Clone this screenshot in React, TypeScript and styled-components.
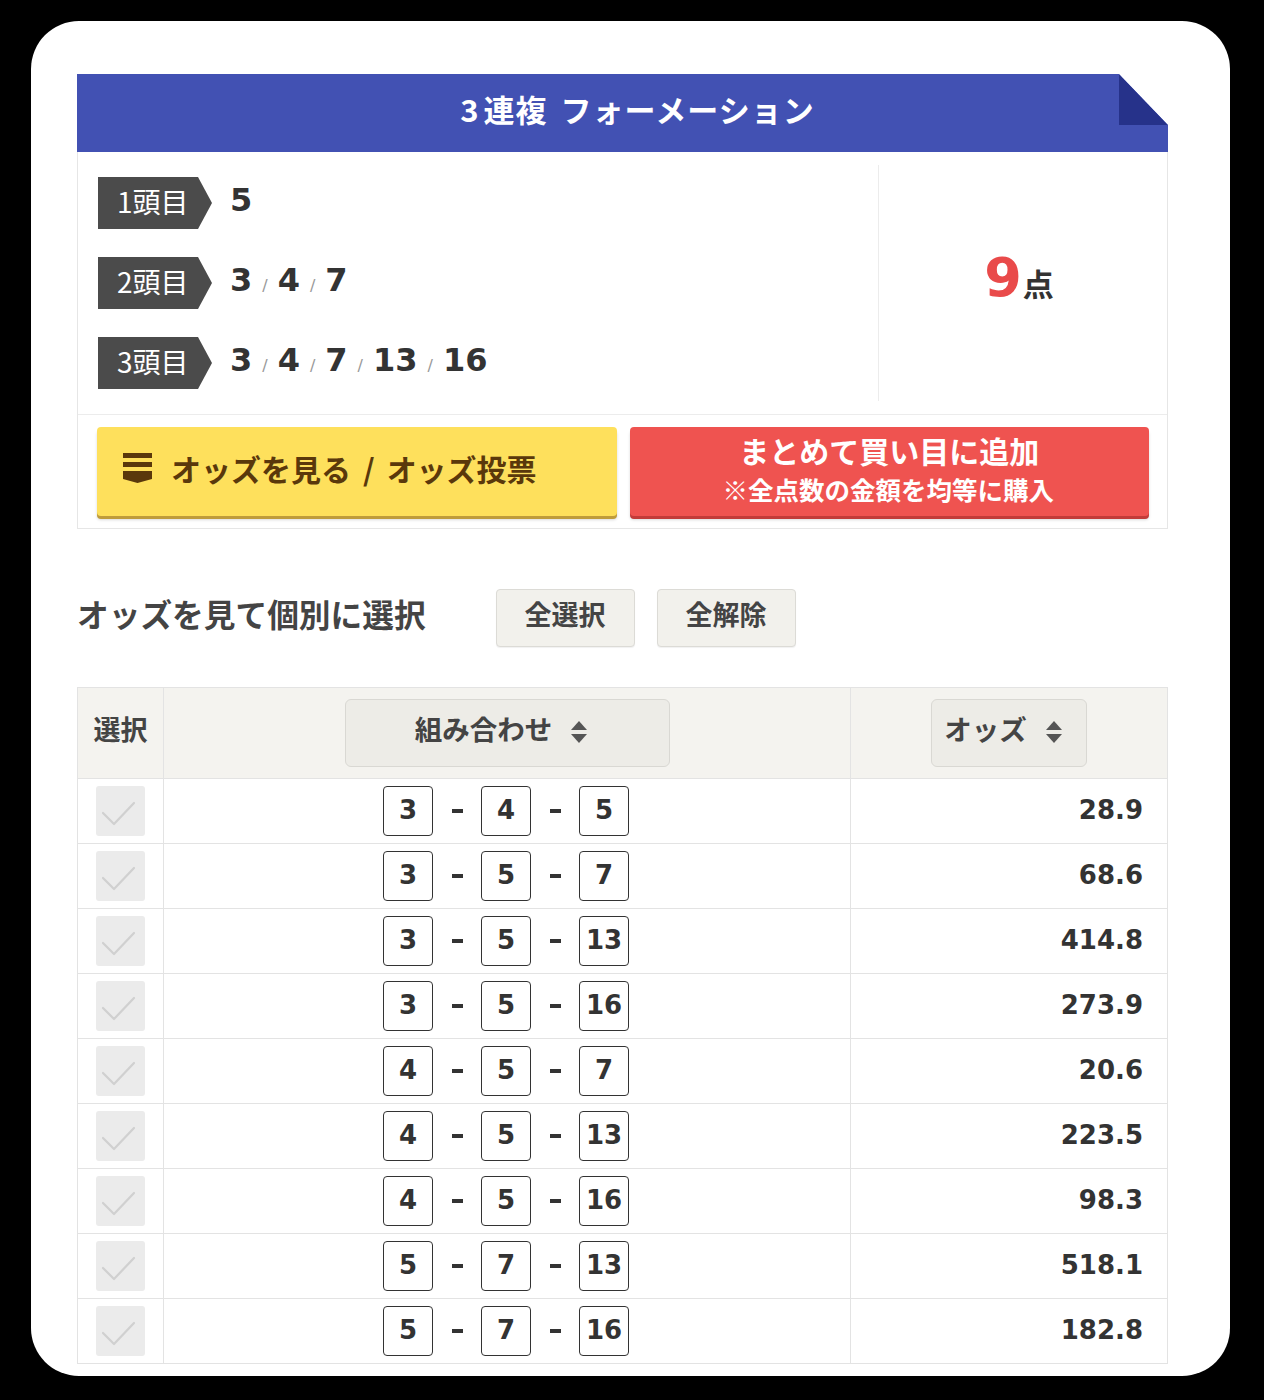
import React from "react";
import styled, { createGlobalStyle } from "styled-components";

const Global = createGlobalStyle`
  html, body { margin: 0; padding: 0; background: #000; }
  body { font-family: "Noto Sans CJK JP", "Noto Sans", sans-serif; color: #333; }
  * { box-sizing: border-box; }
`;

const JP = `"Noto Sans CJK JP", "Noto Sans", sans-serif`;
const NUM = `"DejaVu Sans", "Noto Sans CJK JP", sans-serif`;

const Page = styled.div`
  padding: 21px 34px 24px 31px;
`;

const Card = styled.div`
  width: 1199px;
  background: #fff;
  border-radius: 48px;
  padding: 53px 62px 12px 46px;
`;

const Header = styled.div`
  position: relative;
  height: 78px;
  display: flex;
  align-items: center;
  justify-content: center;
  padding-bottom: 9px;
  padding-left: 30px;
  color: #fff;
  font-family: ${JP};
  font-weight: 700;
  font-size: 31px;
  letter-spacing: 1px;
  background: #4251b3;
  clip-path: polygon(0 0, 1042px 0, 100% 51px, 100% 100%, 0 100%);
  &::after {
    content: "";
    position: absolute;
    left: 1042px;
    top: 0;
    width: 49px;
    height: 51px;
    background: #26328a;
    clip-path: polygon(0 0, 0 100%, 100% 100%);
  }
`;

const HeaderNum = styled.span`
  margin-right: 4px;
`;

const HeaderGap = styled.span`
  display: inline-block;
  width: 13px;
`;

const InfoBox = styled.div`
  border: 1px solid #e6e6e6;
  border-top: none;
`;

const InfoTop = styled.div`
  display: flex;
  border-bottom: 1px solid #ececec;
`;

const Legs = styled.div`
  width: 800px;
  padding: 25px 20px 25px 20px;
  display: flex;
  flex-direction: column;
  gap: 28px;
`;

const LegRow = styled.div`
  display: flex;
  align-items: center;
  height: 52px;
`;

const LegLabel = styled.div`
  width: 114px;
  height: 52px;
  background: #4b4b4b;
  color: #fff;
  font-family: ${JP};
  font-weight: 400;
  font-size: 28px;
  display: flex;
  align-items: center;
  padding-left: 19px;
  padding-bottom: 5px;
  clip-path: polygon(0 0, calc(100% - 14px) 0, 100% 50%, calc(100% - 14px) 100%, 0 100%);
`;

const LegValues = styled.div`
  margin-left: 18px;
  font-family: ${NUM};
  font-weight: 700;
  font-size: 32px;
  color: #333;
  display: flex;
  align-items: baseline;
  margin-top: -6px;
`;

const Sep = styled.span`
  font-family: ${NUM};
  font-weight: 400;
  font-size: 16px;
  color: #999;
  margin: 0 10px;
`;

const Total = styled.div`
  flex: 1;
  margin: 13px 0;
  border-left: 1px solid #ececec;
  display: flex;
  align-items: center;
  justify-content: center;
  padding-right: 8px;
  padding-bottom: 10px;
`;

const TotalNum = styled.span`
  font-family: ${NUM};
  font-weight: 700;
  font-size: 54px;
  color: #e94a4a;
  line-height: 1;
`;

const TotalUnit = styled.span`
  font-family: ${JP};
  font-weight: 700;
  font-size: 31px;
  color: #333;
  margin-left: 1px;
`;

const TotalWrap = styled.div`
  display: flex;
  align-items: baseline;
`;

const Actions = styled.div`
  display: flex;
  gap: 13px;
  padding: 12px 18px 9px 19px;
`;

const ActionButton = styled.button<{ $variant: "yellow" | "red" }>`
  flex: 1;
  height: 89px;
  margin-bottom: 3px;
  border: none;
  border-radius: 4px;
  cursor: pointer;
  font-family: ${JP};
  font-weight: 700;
  display: flex;
  background: ${(p) => (p.$variant === "yellow" ? "#fee05c" : "#ef5350")};
  color: ${(p) => (p.$variant === "yellow" ? "#5a380b" : "#fff")};
  box-shadow: ${(p) =>
    p.$variant === "yellow"
      ? "0 3px 0 #bf9c3b, 0 4px 3px rgba(0,0,0,0.15)"
      : "0 3px 0 #c23b39, 0 4px 3px rgba(0,0,0,0.15)"};
  padding: 0;
`;

const YellowInner = styled.div`
  display: flex;
  align-items: center;
  gap: 19px;
  padding-left: 26px;
  padding-bottom: 8px;
  font-size: 30px;
  width: 100%;
  height: 100%;
`;

const Slash = styled.span`
  margin: 0 12px;
`;

const RedInner = styled.div`
  display: flex;
  flex-direction: column;
  align-items: center;
  justify-content: center;
  width: 100%;
  height: 100%;
  padding-bottom: 2px;
`;

const RedMain = styled.div`
  font-size: 30px;
  line-height: 36px;
`;

const RedSub = styled.div`
  font-size: 25.5px;
  line-height: 42px;
  margin-right: 2px;
`;

const SelectBar = styled.div`
  display: flex;
  align-items: center;
  margin-top: 60px;
`;

const SelectTitle = styled.h2`
  margin: 0 70px 0 0;
  font-family: ${JP};
  font-weight: 700;
  font-size: 31.7px;
  line-height: 40px;
  color: #444;
  padding-bottom: 10px;
`;

const SmallButton = styled.button`
  width: 139px;
  height: 58px;
  margin-right: 22px;
  background: #f2f1ec;
  border: 1px solid #dcdbd6;
  border-radius: 4px;
  font-family: ${JP};
  font-weight: 700;
  font-size: 27px;
  color: #444;
  padding: 0 0 9px 0;
  box-shadow: 0 1px 1px rgba(0, 0, 0, 0.06);
`;

const Table = styled.table`
  margin-top: 40px;
  width: 100%;
  border-collapse: collapse;
  table-layout: fixed;
  border: 1px solid #e3e3e3;
`;

const HeadCell = styled.th<{ $w?: number }>`
  ${(p) => (p.$w ? `width: ${p.$w}px;` : "")}
  height: 91px;
  background: #f4f3ef;
  border: 1px solid #e3e3e3;
  font-family: ${JP};
  font-weight: 700;
  font-size: 27px;
  color: #444;
  padding: 0 0 10px 0;
  text-align: center;
`;

const SortButton = styled.button<{ $w: number }>`
  width: ${(p) => p.$w}px;
  height: 68px;
  margin-top: 9px;
  background: #edece7;
  border: 1px solid #d9d8d3;
  border-radius: 6px;
  font-family: ${JP};
  font-weight: 700;
  font-size: 27.5px;
  color: #444;
  display: inline-flex;
  align-items: center;
  justify-content: center;
  gap: 18px;
  padding: 0 11px 10px 0;
  vertical-align: middle;
  svg {
    margin-top: 8px;
  }
`;

const Row = styled.tr``;

const Cell = styled.td<{ $align?: string }>`
  height: 65px;
  border: 1px solid #e3e3e3;
  padding: 0;
  text-align: ${(p) => p.$align || "center"};
  vertical-align: middle;
`;

const OddsCell = styled(Cell)`
  font-family: ${NUM};
  font-weight: 700;
  font-size: 26px;
  color: #333;
  padding-right: 24px;
  padding-bottom: 3px;
  text-align: right;
`;

const CheckBox = styled.div`
  width: 49px;
  height: 50px;
  margin: 0 auto;
  background: #ebebeb;
  border-radius: 3px;
  display: flex;
  align-items: center;
  justify-content: center;
`;

const Combo = styled.div`
  display: inline-flex;
  align-items: center;
  margin-right: 2px;
`;

const NumBox = styled.span`
  width: 50px;
  height: 50px;
  border: 1.5px solid #333;
  border-radius: 4px;
  display: inline-flex;
  align-items: center;
  justify-content: center;
  padding-bottom: 3px;
  font-family: ${NUM};
  font-weight: 700;
  font-size: 26px;
  color: #333;
  background: #fff;
`;

const Dash = styled.span`
  width: 48px;
  display: inline-flex;
  justify-content: center;
  &::before {
    content: "";
    width: 11px;
    height: 4px;
    background: #333;
  }
`;

const SortIcon = () => (
  <svg width="18" height="26" viewBox="0 0 18 26">
    <path d="M1 11 L9 2 L17 11 Z" fill="#555" />
    <path d="M1 15 L9 24 L17 15 Z" fill="#555" />
  </svg>
);

const StackIcon = () => (
  <svg width="29" height="32" viewBox="0 0 29 32">
    <rect x="0" y="1" width="29" height="5" fill="#5a380b" />
    <rect x="0" y="10" width="29" height="5" fill="#5a380b" />
    <path d="M0 19 H29 V27 L14.5 31 L0 27 Z" fill="#5a380b" />
  </svg>
);

const Check = () => (
  <svg width="49" height="50" viewBox="0 0 49 50">
    <polyline points="7,27 18,38 38,17" fill="none" stroke="#d0d0d0" strokeWidth="2.2" strokeLinecap="round" strokeLinejoin="round" />
  </svg>
);

const legs: { label: string; values: string[] }[] = [
  { label: "1頭目", values: ["5"] },
  { label: "2頭目", values: ["3", "4", "7"] },
  { label: "3頭目", values: ["3", "4", "7", "13", "16"] },
];

const rows: { c: [string, string, string]; odds: string }[] = [
  { c: ["3", "4", "5"], odds: "28.9" },
  { c: ["3", "5", "7"], odds: "68.6" },
  { c: ["3", "5", "13"], odds: "414.8" },
  { c: ["3", "5", "16"], odds: "273.9" },
  { c: ["4", "5", "7"], odds: "20.6" },
  { c: ["4", "5", "13"], odds: "223.5" },
  { c: ["4", "5", "16"], odds: "98.3" },
  { c: ["5", "7", "13"], odds: "518.1" },
  { c: ["5", "7", "16"], odds: "182.8" },
];

export default function App() {
  return (
    <>
      <Global />
      <Page>
        <Card>
          <Header>
            <HeaderNum>3</HeaderNum>連複<HeaderGap />フォーメーション
          </Header>
          <InfoBox>
            <InfoTop>
              <Legs>
                {legs.map((l) => (
                  <LegRow key={l.label}>
                    <LegLabel>{l.label}</LegLabel>
                    <LegValues>
                      {l.values.map((v, i) => (
                        <React.Fragment key={i}>
                          {i > 0 && <Sep>/</Sep>}
                          <span>{v}</span>
                        </React.Fragment>
                      ))}
                    </LegValues>
                  </LegRow>
                ))}
              </Legs>
              <Total>
                <TotalWrap>
                  <TotalNum>9</TotalNum>
                  <TotalUnit>点</TotalUnit>
                </TotalWrap>
              </Total>
            </InfoTop>
            <Actions>
              <ActionButton $variant="yellow">
                <YellowInner>
                  <StackIcon />
                  <span>
                    オッズを見る<Slash>/</Slash>オッズ投票
                  </span>
                </YellowInner>
              </ActionButton>
              <ActionButton $variant="red">
                <RedInner>
                  <RedMain>まとめて買い目に追加</RedMain>
                  <RedSub>※全点数の金額を均等に購入</RedSub>
                </RedInner>
              </ActionButton>
            </Actions>
          </InfoBox>

          <SelectBar>
            <SelectTitle>オッズを見て個別に選択</SelectTitle>
            <SmallButton>全選択</SmallButton>
            <SmallButton>全解除</SmallButton>
          </SelectBar>

          <Table>
            <thead>
              <tr>
                <HeadCell $w={86}>選択</HeadCell>
                <HeadCell $w={687}>
                  <SortButton $w={325}>
                    組み合わせ
                    <SortIcon />
                  </SortButton>
                </HeadCell>
                <HeadCell>
                  <SortButton $w={156}>
                    オッズ
                    <SortIcon />
                  </SortButton>
                </HeadCell>
              </tr>
            </thead>
            <tbody>
              {rows.map((r, i) => (
                <Row key={i}>
                  <Cell>
                    <CheckBox>
                      <Check />
                    </CheckBox>
                  </Cell>
                  <Cell>
                    <Combo>
                      <NumBox>{r.c[0]}</NumBox>
                      <Dash />
                      <NumBox>{r.c[1]}</NumBox>
                      <Dash />
                      <NumBox>{r.c[2]}</NumBox>
                    </Combo>
                  </Cell>
                  <OddsCell>{r.odds}</OddsCell>
                </Row>
              ))}
            </tbody>
          </Table>
        </Card>
      </Page>
    </>
  );
}
